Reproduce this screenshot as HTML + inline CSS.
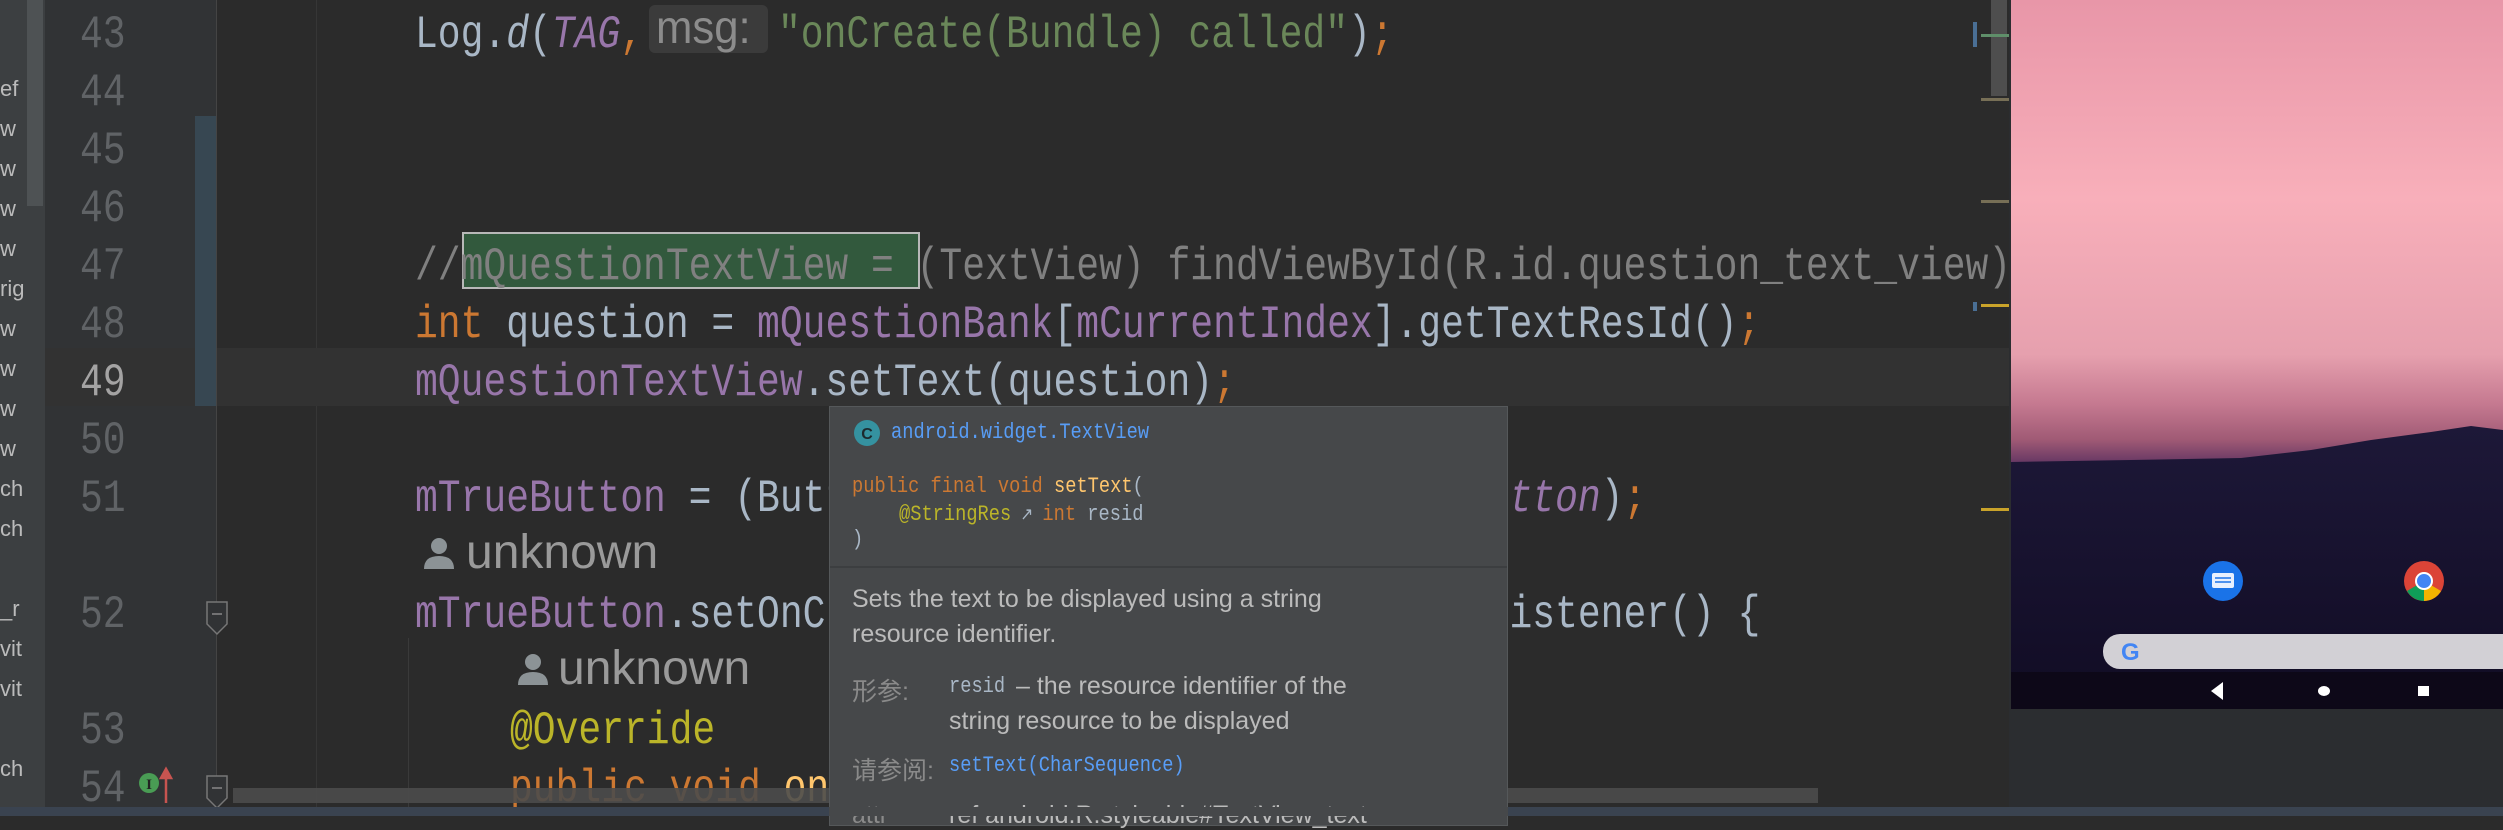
<!DOCTYPE html>
<html><head><meta charset="utf-8"><style>
*{margin:0;padding:0;box-sizing:border-box}
body{width:2503px;height:816px;overflow:hidden;background:#2b2b2b;position:relative;font-family:"Liberation Sans",sans-serif}
.a{position:absolute}
.ln{position:absolute;left:415px;font:46px/58px "Liberation Mono",monospace;transform:scaleX(.826);transform-origin:0 0;white-space:pre;color:#a9b7c6}
.num{position:absolute;left:80px;width:50px;font:46px/58px "Liberation Mono",monospace;transform:scaleX(.826);transform-origin:0 0;color:#606366}
.k{color:#cc7832}.p{color:#9876aa}.s{color:#6a8759}.i{font-style:italic}.y{color:#ffc66d}.an{color:#bbb529}.c{color:#808080}
.lp{position:absolute;left:0;font:22px "Liberation Sans",sans-serif;color:#bbbbbb}
.inl{position:absolute;font:48px/58px "Liberation Sans",sans-serif;color:#9a9a9a}
.pm{font:22px "Liberation Mono",monospace;white-space:pre;transform:scaleX(.85);transform-origin:0 0;position:absolute}
.pt{position:absolute;font:25px "Liberation Sans","Noto Sans CJK SC",sans-serif;color:#bbbbbb;white-space:pre}
</style></head><body>
<div class="a" style="left:0;top:0;width:45px;height:816px;background:#3c3f41"></div>
<div class="a" style="left:27px;top:0;width:16px;height:206px;background:#4e5254"></div>
<div class="lp" style="top:76px">ef</div><div class="lp" style="top:116px">w</div><div class="lp" style="top:156px">w</div><div class="lp" style="top:196px">w</div><div class="lp" style="top:236px">w</div><div class="lp" style="top:276px">rig</div><div class="lp" style="top:316px">w</div><div class="lp" style="top:356px">w</div><div class="lp" style="top:396px">w</div><div class="lp" style="top:436px">w</div><div class="lp" style="top:476px">ch</div><div class="lp" style="top:516px">ch</div><div class="lp" style="top:596px">_r</div><div class="lp" style="top:636px">vit</div><div class="lp" style="top:676px">vit</div><div class="lp" style="top:756px">ch</div><div class="lp" style="top:796px">..</div>
<div class="a" style="left:45px;top:0;width:171px;height:807px;background:#313335"></div>
<div class="a" style="left:216px;top:0;width:1px;height:807px;background:#444"></div>
<div class="a" style="left:316px;top:0;width:1px;height:807px;background:#363636"></div>
<div class="a" style="left:408px;top:638px;width:1px;height:169px;background:#3a3a3a"></div>
<div class="a" style="left:195px;top:116px;width:21px;height:290px;background:#374752"></div>
<div class="a" style="left:45px;top:348px;width:150px;height:58px;background:#323232"></div>
<div class="a" style="left:217px;top:348px;width:1792px;height:58px;background:#323232"></div>
<div class="num" style="top:6px">43</div><div class="num" style="top:64px">44</div><div class="num" style="top:122px">45</div><div class="num" style="top:180px">46</div><div class="num" style="top:238px">47</div><div class="num" style="top:296px">48</div><div class="num" style="top:354px;color:#a4a3a3">49</div><div class="num" style="top:412px">50</div><div class="num" style="top:470px">51</div><div class="num" style="top:586px">52</div><div class="num" style="top:702px">53</div><div class="num" style="top:760px">54</div>
<svg class="a" style="left:205px;top:600px" width="24" height="36"><path d="M2 2H22V24L12 34L2 24Z" fill="#313335" stroke="#777" stroke-width="1.5"/><path d="M7 14H17" stroke="#888" stroke-width="1.5"/></svg>
<svg class="a" style="left:205px;top:774px" width="24" height="36"><path d="M2 2H22V24L12 34L2 24Z" fill="#313335" stroke="#777" stroke-width="1.5"/><path d="M7 14H17" stroke="#888" stroke-width="1.5"/></svg>
<svg class="a" style="left:137px;top:766px" width="40" height="38"><circle cx="12" cy="17" r="10" fill="#499c54"/><text x="12" y="23" font-size="15" font-family="Liberation Serif" fill="#222" text-anchor="middle" font-weight="bold">I</text><path d="M29 37V6M24 12L29 3L34 12Z" stroke="#c75450" stroke-width="2.5" fill="#c75450"/></svg>
<div class="ln" style="top:6px">Log.<span class="i">d</span>(<span class="p i">TAG</span><span class="k">,</span></div>
<div class="a" style="left:649px;top:5px;width:119px;height:48px;background:#3b3b3b;border-radius:6px"></div>
<div class="a" style="left:656px;top:0px;font:46px/54px 'Liberation Sans',sans-serif;color:#8c8c8c;transform:scaleX(.95);transform-origin:0 0">msg:</div>
<div class="ln" style="top:6px;left:778px"><span class="s">"onCreate(Bundle) called"</span>)<span class="k">;</span></div>
<div class="a" style="left:462px;top:232px;width:458px;height:57px;background:#32593d;border:2px solid #b8b8b8"></div>
<div class="ln c" style="top:238px">//mQuestionTextView = (TextView) findViewById(R.id.question_text_view);</div>
<div class="ln" style="top:296px"><span class="k">int</span> question = <span class="p">mQuestionBank</span>[<span class="p">mCurrentIndex</span>].getTextResId()<span class="k">;</span></div>
<div class="ln" style="top:354px"><span class="p">mQuestionTextView</span>.setText(question)<span class="k">;</span></div>
<div class="ln" style="top:470px"><span class="p">mTrueButton</span> = (Button) findViewById(R.id.<span class="p i">true_button</span>)<span class="k">;</span></div>
<svg class="a" style="left:422px;top:537px" width="34" height="34"><circle cx="17" cy="9" r="8" fill="#8c9396"/><path d="M2 32Q2 19 17 19Q32 19 32 32Z" fill="#8c9396"/></svg>
<div class="inl" style="left:466px;top:524px">unknown</div>
<div class="ln" style="top:586px"><span class="p">mTrueButton</span>.setOnClickListener(<span class="k">new </span>View.OnClickListener() {</div>
<svg class="a" style="left:516px;top:653px" width="34" height="34"><circle cx="17" cy="9" r="8" fill="#8c9396"/><path d="M2 32Q2 19 17 19Q32 19 32 32Z" fill="#8c9396"/></svg>
<div class="inl" style="left:558px;top:640px">unknown</div>
<div class="ln an" style="top:702px;left:510px">@Override</div>
<div class="ln" style="top:760px;left:510px"><span class="k">public void </span><span class="y">onClick</span>(View v) {</div>
<div class="a" style="left:233px;top:788px;width:1585px;height:15px;background:#4b4b4b;opacity:.9"></div>
<div class="a" style="left:1991px;top:0;width:16px;height:96px;background:#4e4e4e"></div>
<div class="a" style="left:1973px;top:22px;width:4px;height:25px;background:#4a6f95"></div>
<div class="a" style="left:1981px;top:34px;width:28px;height:3px;background:#5f8f6a"></div>
<div class="a" style="left:1981px;top:98px;width:28px;height:3px;background:#776f56"></div>
<div class="a" style="left:1981px;top:200px;width:28px;height:3px;background:#776f56"></div>
<div class="a" style="left:1973px;top:302px;width:4px;height:9px;background:#4a6f95"></div>
<div class="a" style="left:1981px;top:304px;width:28px;height:3px;background:#c9a32a"></div>
<div class="a" style="left:1981px;top:508px;width:28px;height:3px;background:#c9a32a"></div>
<div class="a" style="left:829px;top:406px;width:679px;height:420px;background:#46484a;border:1px solid #55585a"></div>
<div class="a" style="left:830px;top:566px;width:677px;height:2px;background:#3c3e40"></div>
<svg class="a" style="left:853px;top:419px" width="28" height="28"><circle cx="14" cy="14" r="13" fill="#3592a0"/><text x="14" y="20" font-size="16" font-family="Liberation Sans" fill="#1d2a2e" text-anchor="middle" font-weight="bold">C</text></svg>
<div class="pm" style="left:891px;top:420px;color:#589df6">android.widget.TextView</div>
<div class="pm" style="left:852px;top:474px"><span class="k">public final void </span><span class="y">setText</span><span style="color:#a9b7c6">(</span></div>
<div class="pm" style="left:899px;top:502px"><span class="an">@StringRes</span><span style="color:#a9b7c6;font-size:18px"> &#8599; </span><span class="k">int </span><span style="color:#a9b7c6">resid</span></div>
<div class="pm" style="left:852px;top:527px;color:#a9b7c6">)</div>
<div class="pt" style="left:852px;top:585px">Sets the text to be displayed using a string</div>
<div class="pt" style="left:852px;top:620px">resource identifier.</div>
<div class="pt" style="left:852px;top:672px;color:#8a8a8a">形参:</div>
<div class="pm" style="left:949px;top:674px;color:#a9b7c6">resid</div>
<div class="pt" style="left:1016px;top:672px">– the resource identifier of the</div>
<div class="pt" style="left:949px;top:707px">string resource to be displayed</div>
<div class="pt" style="left:852px;top:751px;color:#8a8a8a">请参阅:</div>
<div class="pm" style="left:949px;top:753px;color:#589df6">setText(CharSequence)</div>
<div class="pt" style="left:852px;top:801px;color:#8a8a8a">attr</div>
<div class="pt" style="left:949px;top:801px">ref android.R.styleable#TextView_text</div>
<div class="a" style="left:2009px;top:0;width:494px;height:807px;background:#2b2d30"></div>
<svg class="a" style="left:2011px;top:0" width="492" height="709">
<defs><linearGradient id="sky" x1="0" y1="0" x2="0" y2="1">
<stop offset="0" stop-color="#e896a8"/><stop offset=".28" stop-color="#f8afba"/><stop offset=".5" stop-color="#e6a0ae"/><stop offset=".57" stop-color="#c57990"/><stop offset=".62" stop-color="#a05a75"/><stop offset=".66" stop-color="#5a3060"/><stop offset="1" stop-color="#1c1535"/></linearGradient>
<linearGradient id="gr" x1="0" y1="0" x2="0" y2="1"><stop offset="0" stop-color="#1d1838"/><stop offset="1" stop-color="#110c24"/></linearGradient></defs>
<rect width="492" height="709" fill="url(#sky)"/>
<path d="M0 462L120 460L230 458L300 450L360 440L420 432L460 426L492 430V709H0Z" fill="url(#gr)"/>
<rect y="672" width="492" height="37" fill="#0d0818"/>
<circle cx="212" cy="581" r="20" fill="#1a73e8"/><rect x="201" y="573" width="22" height="15" rx="2" fill="#e8f0fe"/><path d="M204 578H220M204 582H220" stroke="#1a73e8" stroke-width="1.5"/>
<circle cx="413" cy="581" r="20" fill="#db4437"/><path d="M413 581L396 591A20 20 0 0 0 413 601Z" fill="#0f9d58"/><path d="M413 581L430 591A20 20 0 0 1 413 601Z" fill="#f4b400"/><circle cx="413" cy="581" r="9" fill="#fff"/><circle cx="413" cy="581" r="7" fill="#4285f4"/>
<rect x="92" y="634" width="420" height="35" rx="17" fill="#d2d0d5"/>
<text x="110" y="660" font-size="24" font-family="Liberation Sans" font-weight="bold" fill="#4285f4">G</text>
<path d="M212 682L200 691L212 700Z" fill="#fff"/>
<ellipse cx="313" cy="691" rx="6" ry="5" fill="#fff"/>
<rect x="407" y="686" width="11" height="10" fill="#fff"/>
</svg>
<div class="a" style="left:0;top:807px;width:2503px;height:9px;background:#3a4350"></div>
<div class="a" style="left:829px;top:807px;width:679px;height:9px;background:#46484a"></div>
</body></html>
